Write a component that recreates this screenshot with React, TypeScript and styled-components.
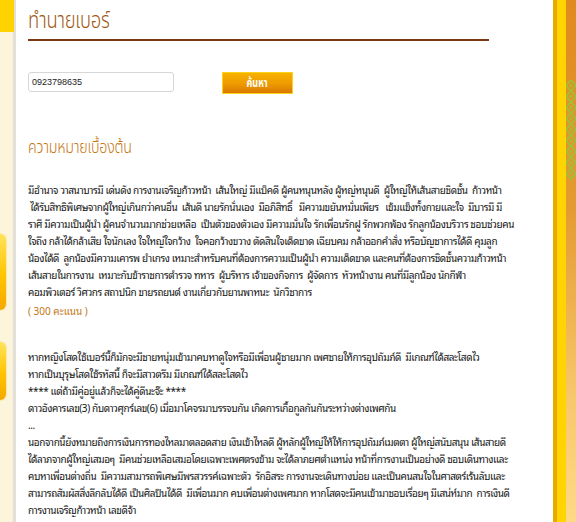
import styled, { createGlobalStyle } from "styled-components";

const GlobalStyle = createGlobalStyle`
  html, body {
    margin: 0;
    padding: 0;
    background: #ffffff;
  }
  body {
    font-family: "Noto Sans Thai Looped", Loma, "DejaVu Sans", sans-serif;
  }
`;

const para1 = [
  "มีอำนาจ วาสนาบารมี เด่นดัง การงานเจริญก้าวหน้า  เส้นใหญ่ มีแบ็คดี ผู้คนหนุนหลัง ผู้หญ่หนุนดี  ผู้ใหญ่ให้เส้นสายชิดชั้น  ก้าวหน้า",
  " ได้รับสิทธิพิเศษจากผู้ใหญ่เกินกว่าคนอื่น  เส้นดี นายรักนั่นเอง  มือภิสิทธิ์   มีความขยันหมั่นเพียร   เข้มแข็งทั้งกายและใจ  มีบารมี มี",
  "ราศี มีความเป็นผู้นำ ผู้คนจำนวนมากช่วยเหลือ  เป็นตัวของตัวเอง มีความมั่นใจ รักเพื่อนรักฝู รักพวกพ้อง รักลูกน้องบริวาร ชอบช่วยคน",
  "ใจถึง กล้าได้กล้าเสีย ใจนักเลง ใจใหญ่ใจกว้าง  ใจคอกว้างขวาง ตัดสินใจเด็ดขาด เฉียบคม กล้าออกคำสั่ง หรือบัญชาการได้ดี คุมลูก",
  "น้องได้ดี  ลูกน้องมีความเคารพ ยำเกรง เหมาะสำหรับคนที่ต้องการความเป็นผู้นำ ความเด็ดขาด และคนที่ต้องการชิดชั้นความก้าวหน้า",
  "เส้นสายในการงาน  เหมาะกับข้าราชการตำรวจ ทหาร  ผู้บริหาร เจ้าของกิจการ  ผู้จัดการ  หัวหน้างาน คนที่มีลูกน้อง นักกีฬา",
  "คอมพิวเตอร์ วิศวกร สถาปนิก ขายรถยนต์ งานเกี่ยวกับยานพาหนะ  นักวิชาการ",
];

const para2 = [
  "หากหญิงโสดใช้เบอร์นี้ก็มักจะมีชายหนุ่มเข้ามาคบหาดูใจหรือมีเพื่อนผู้ชายมาก เพศชายให้การอุปถัมภ์ดี  มีเกณฑ์ได้สละโสดไว",
  "หากเป็นบุรุษโสดใช้รหัสนี้ ก็จะมีสาวตรึม มีเกณฑ์ได้สละโสดไว",
  "**** แต่ถ้ามีคู่อยู่แล้วก็จะได้คู่ดีนะจ๊ะ ****",
  "ดาวอังคารเลข(3) กับดาวศุกร์เลข(6) เมื่อมาโคจรมาบรรจบกัน เกิดการเกื้อกูลกันกันระหว่างต่างเพศกัน",
  "...",
  "นอกจากนี้ยังหมายถึงการเงินการทองไหลมาตลอดสาย เงินเข้าไหลดี ผู้หลักผู้ใหญ่ให้ให้การอุปถัมภ์เมตตา ผู้ใหญ่สนับสนุน เส้นสายดี",
  "ได้ลาภจากผู้ใหญ่เสมอๆ  มีคนช่วยเหลือเสมอโดยเฉพาะเพศตรงข้าม จะได้ลาภยศตำแหน่ง หน้าที่การงานเป็นอย่างดี ชอบเดินทางและ",
  "คบหาเพื่อนต่างถิ่น  มีความสามารถพิเศษมีพรสวรรค์เฉพาะตัว  รักอิสระ การงานจะเดินทางบ่อย และเป็นคนสนใจในศาสตร์เร้นลับและ",
  "สามารถสัมผัสสิ่งลึกลับได้ดี เป็นศิลปินได้ดี  มีเพื่อนมาก คบเพื่อนต่างเพศมาก หากโสดจะมีคนเข้ามาชอบเรื่อยๆ มีเสน่ห์มาก  การเงินดี",
  "การงานเจริญก้าวหน้า เลขดีจ้า",
];

export default function App() {
  return (
    <>
      <GlobalStyle />
      <Page>
        <LeftRail>
          <TopTab />
          <SideTab $top={201} $height={78} />
          <SideTab $top={30} $height={60} />
        </LeftRail>
        <Main>
          <Title>
            <Squeeze $scale={0.8}>ทำนายเบอร์</Squeeze>
          </Title>
          <SearchRow>
            <NumberInput defaultValue="0923798635" />
            <SearchButton>
              <Squeeze $scale={0.75} $origin="center">ค้นหา</Squeeze>
            </SearchButton>
          </SearchRow>
          <SubTitle>
            <Squeeze $scale={0.84}>ความหมายเบื้องต้น</Squeeze>
          </SubTitle>
          <Paragraph>
            {para1.map((line, i) => (
              <Line key={i}>{line}</Line>
            ))}
          </Paragraph>
          <Score>( 300 คะแนน )</Score>
          <Paragraph $gap={29}>
            {para2.map((line, i) => (
              <Line key={i}>{line}</Line>
            ))}
          </Paragraph>
        </Main>
        <RightRail>
          <DarkStripe />
          <BrightStripe />
          <OrangeStripe>
            <svg width="10" height="100" viewBox="0 0 10 100">
              {Array.from({ length: 9 }).map((_, i) => (
                <g key={i} transform={`translate(0 ${i * 11})`}>
                  <path
                    d="M0 5.5 L5 0 L10 5.5 L5 11 Z"
                    fill="none"
                    stroke="#9cc23a"
                    strokeWidth="1.6"
                  />
                  <circle cx="5" cy="5.5" r="1.4" fill="#9cc23a" />
                </g>
              ))}
            </svg>
          </OrangeStripe>
        </RightRail>
      </Page>
    </>
  );
}

const Page = styled.div`
  display: flex;
  width: 576px;
  height: 522px;
  overflow: hidden;
`;

const LeftRail = styled.div`
  width: 13px;
  flex-shrink: 0;
  display: flex;
  flex-direction: column;
  background: #fdf4dc;
  border-right: 3px solid #e4e0d6;
  box-shadow: inset -1px 0 0 #f2efe8;
`;

const TopTab = styled.div`
  height: 32px;
  background: #ffd200;
  margin-right: -1px;
`;

const SideTab = styled.div<{ $top: number; $height: number }>`
  margin-top: ${(p) => p.$top}px;
  height: ${(p) => p.$height}px;
  width: 7px;
  box-sizing: border-box;
  border: 1px solid #fbe9a4;
  border-left: none;
  border-radius: 0 7px 7px 0;
  background: linear-gradient(180deg, #ffe35a 0%, #ffc400 55%, #f5a800 100%);
`;

const Main = styled.div`
  flex: 1;
  background: #ffffff;
  padding: 0 64px 0 12px;
  display: flex;
  flex-direction: column;
  min-width: 0;
`;

const Squeeze = styled.span<{ $scale: number; $origin?: string }>`
  display: inline-block;
  transform: scaleX(${(p) => p.$scale});
  transform-origin: ${(p) => p.$origin ?? "left"} center;
`;

const Title = styled.h1`
  margin: 6px 0 0;
  padding-bottom: 3px;
  border-bottom: 2px solid #7b3a12;
  font-family: "Noto Sans Thai", "DejaVu Sans", sans-serif;
  font-weight: 300;
  font-size: 23px;
  letter-spacing: -0.3px;
  line-height: 30px;
  color: #9e5812;
`;

const SearchRow = styled.div`
  display: flex;
  align-items: flex-start;
  gap: 48px;
  margin-top: 31px;
`;

const NumberInput = styled.input`
  width: 146px;
  height: 20px;
  box-sizing: border-box;
  border: 1px solid #d6d6d6;
  border-radius: 3px;
  padding: 0 3px;
  font-family: Arial, "Liberation Sans", sans-serif;
  font-size: 9px;
  color: #222;
  outline: none;
`;

const SearchButton = styled.button`
  width: 71px;
  height: 22px;
  box-sizing: border-box;
  border: 1px solid #ffd21a;
  background: linear-gradient(180deg, #f7b200 0%, #ee9a00 55%, #d97800 100%);
  color: #ffffff;
  font-family: "Noto Sans Thai", "DejaVu Sans", sans-serif;
  font-weight: 700;
  font-size: 12px;
  padding: 0;
  cursor: pointer;
`;

const SubTitle = styled.h2`
  margin: 42px 0 0;
  font-family: "Noto Sans Thai", "DejaVu Sans", sans-serif;
  font-weight: 300;
  font-size: 17px;
  letter-spacing: -0.3px;
  line-height: 24px;
  color: #c47614;
`;

const Paragraph = styled.div<{ $gap?: number }>`
  margin-top: ${(p) => p.$gap ?? 21}px;
  display: flex;
  flex-direction: column;
  font-size: 10px;
  letter-spacing: -0.42px;
  line-height: 17px;
  color: #141414;
  white-space: pre;
`;

const Line = styled.div`
  height: 17px;
`;

const Score = styled.div`
  margin-top: 2px;
  font-size: 10px;
  line-height: 17px;
  color: #c47614;
`;

const RightRail = styled.div`
  width: 23px;
  flex-shrink: 0;
  display: flex;
`;

const DarkStripe = styled.div`
  width: 4px;
  background: #e9aa00;
`;

const BrightStripe = styled.div`
  width: 9px;
  background: #ffd400;
`;

const OrangeStripe = styled.div`
  flex: 1;
  background: linear-gradient(180deg, #e0891e 0%, #e49a32 40%, #f7c66a 75%, #ffd986 100%);
  padding-top: 80px;
  overflow: hidden;
`;
